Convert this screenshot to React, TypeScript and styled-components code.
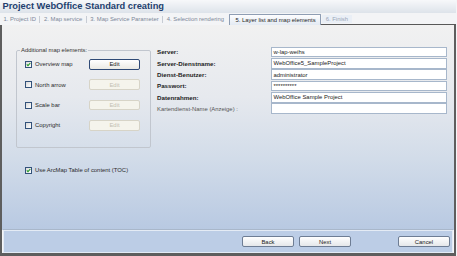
import React from "react";
import styled, { createGlobalStyle } from "styled-components";

const GlobalStyle = createGlobalStyle`
  html, body { margin: 0; padding: 0; }
  body {
    width: 457px; height: 256px; overflow: hidden; background: #f4f5f7;
    font-family: "Liberation Sans", Arial, sans-serif;
  }
`;

const Window = styled.div`
  width: 456px; height: 256px;
  display: flex; flex-direction: column;
`;

const TitleBar = styled.div`
  height: 13px; flex: none;
  display: flex; align-items: center; padding-left: 2.5px;
  background: linear-gradient(#f7f8fa, #dde3ea);
`;

const Title = styled.div`
  font-weight: bold; font-size: 9.3px; line-height: 1; color: #23406e;
`;

const TabRow = styled.div`
  height: 12px; flex: none; display: flex; align-items: stretch;
  background: #f3f4f6; font-size: 5.9px;
`;

const Tab = styled.div`
  display: flex; align-items: center; padding: 0 3.5px;
  color: #7d8899; white-space: nowrap;
`;

const Sep = styled.span`
  width: 1px; height: 7px; align-self: center; background: #c7ccd4;
`;

const ActiveTab = styled.div`
  display: flex; align-items: center; margin-left: 2px; margin-top: 1px;
  padding: 0 4px 0 5px; color: #262626; white-space: nowrap;
  border: 1px solid #8e9db3; border-bottom: none; border-radius: 1px 1px 0 0;
  background: linear-gradient(#fdfdfe, #e3eaf3);
`;

const TabRest = styled.div`
  flex: 1; display: flex; align-items: stretch; padding-left: 1px;
  border-bottom: 1px solid #585858;
`;

const FinishTab = styled.div`
  display: flex; align-items: center; margin: 2px 0 1px; padding: 0 4px;
  color: #9aa6b6; background: #eaeff6; white-space: nowrap;
`;

const Frame = styled.div`
  flex: 1; display: flex; flex-direction: column;
  border-left: 2px solid #5e5e5e; border-right: 2px solid #5e5e5e;
  border-bottom: 3px solid #5e5e5e;
`;

const Main = styled.div`
  flex: 1; display: flex; flex-direction: column;
  padding: 21.5px 0 0 14px;
  background: linear-gradient(#f1f1f1 0%, #e6e9ee 35%, #d2dce9 65%, #b8c9e2 100%);
  font-size: 5.9px;
`;

const Columns = styled.div`
  display: flex; gap: 6px; align-items: flex-start;
`;

const GroupBox = styled.fieldset`
  width: 135px; box-sizing: border-box; margin: 0;
  padding: 5.5px 0 16.3px 8px;
  border: 1px solid #c1c6ce; border-radius: 2px;
  display: flex; flex-direction: column; gap: 9.9px;
`;

const Legend = styled.legend`
  font-size: 5.9px; line-height: 7px; color: #333; padding: 0 1px; margin-left: -5px;
`;

const ElementRow = styled.div`
  display: grid; grid-template-columns: 7px 51px 51px; column-gap: 3px;
  align-items: center; height: 10.5px;
`;

const Box = styled.span`
  width: 7px; height: 7px; box-sizing: border-box; display: flex;
  align-items: center; justify-content: center;
  border: 1px solid #33527a;
  background: linear-gradient(135deg, #d9d9d9, #ffffff);
`;

const CheckLabel = styled.span`
  color: #2b2b2b; white-space: nowrap;
`;

const EditButton = styled.div<{ $disabled?: boolean }>`
  height: 10.5px; box-sizing: border-box; display: flex;
  align-items: center; justify-content: center; border-radius: 2px;
  border: 1px solid ${p => (p.$disabled ? "#d7d4c7" : "#2f4a76")};
  background: ${p => (p.$disabled ? "#f5f4ec" : "linear-gradient(#ffffff, #ebeae4)")};
  color: ${p => (p.$disabled ? "#c2beb2" : "#222")};
`;

const Form = styled.div`
  display: grid; grid-template-columns: 114px 176px;
  grid-auto-rows: 10.5px; row-gap: 0.85px; margin-top: 0.2px;
`;

const FieldLabel = styled.div<{ $plain?: boolean }>`
  display: flex; align-items: center; white-space: nowrap;
  font-weight: ${p => (p.$plain ? "normal" : "bold")};
  font-size: ${p => (p.$plain ? "5.9px" : "6.2px")};
  color: ${p => (p.$plain ? "#555" : "#1c1c1c")};
`;

const Field = styled.div`
  box-sizing: border-box; display: flex; align-items: center;
  border: 1px solid #a7b7cb; background: #fff; padding-left: 1.5px;
  color: #222; white-space: nowrap; overflow: hidden;
`;

const TocRow = styled.div`
  display: flex; align-items: center; gap: 3px; margin: 19px 0 0 9px;
`;

const BottomPanel = styled.div`
  height: 23px; box-sizing: border-box; flex: none; margin: 0 1px;
  display: flex; align-items: center; justify-content: flex-end;
  padding-right: 2px;
  background: #bccde6;
  border: 1px solid #e4ebf5;
  box-shadow: 0 -1px 0 #a9b7ca;
  font-size: 5.9px;
`;

const NavButton = styled.div<{ $gap?: number }>`
  width: 52px; height: 11px; box-sizing: border-box;
  margin-left: ${p => p.$gap ?? 0}px;
  display: flex; align-items: center; justify-content: center;
  border: 1px solid #6e7d94; border-radius: 2px;
  background: linear-gradient(#ffffff, #e5e7ea);
  color: #222;
`;

const Check = ({ checked }: { checked?: boolean }) => (
  <Box>
    {checked && (
      <svg width="5" height="5" viewBox="0 0 5 5">
        <path d="M0.8 2.4 L2 3.7 L4.3 1" fill="none" stroke="#1f9a23" strokeWidth="1.1" />
      </svg>
    )}
  </Box>
);

const elements = [
  { label: "Overview map", checked: true },
  { label: "North arrow" },
  { label: "Scale bar" },
  { label: "Copyright" },
];

const fields = [
  { label: "Server:", value: "w-lap-weihs" },
  { label: "Server-Dienstname:", value: "WebOffice5_SampleProject" },
  { label: "Dienst-Benutzer:", value: "administrator" },
  { label: "Passwort:", value: "**********" },
  { label: "Datenrahmen:", value: "WebOffice Sample Project" },
  { label: "Kartendienst-Name (Anzeige) :", value: "", plain: true },
];

export default function App() {
  return (
    <>
      <GlobalStyle />
      <Window>
        <TitleBar>
          <Title>Project WebOffice Standard creating</Title>
        </TitleBar>
        <TabRow>
          <Tab>1. Project ID</Tab>
          <Sep />
          <Tab>2. Map service</Tab>
          <Sep />
          <Tab>3. Map Service Parameter</Tab>
          <Sep />
          <Tab>4. Selection rendering</Tab>
          <ActiveTab>5. Layer list and map elements</ActiveTab>
          <TabRest>
            <FinishTab>6. Finish</FinishTab>
          </TabRest>
        </TabRow>
        <Frame>
          <Main>
            <Columns>
              <GroupBox>
                <Legend>Additional map elements:</Legend>
                {elements.map(e => (
                  <ElementRow key={e.label}>
                    <Check checked={e.checked} />
                    <CheckLabel>{e.label}</CheckLabel>
                    <EditButton $disabled={!e.checked}>Edit</EditButton>
                  </ElementRow>
                ))}
              </GroupBox>
              <Form>
                {fields.map(f => (
                  <React.Fragment key={f.label}>
                    <FieldLabel $plain={f.plain}>{f.label}</FieldLabel>
                    <Field>{f.value}</Field>
                  </React.Fragment>
                ))}
              </Form>
            </Columns>
            <TocRow>
              <Check checked />
              <CheckLabel>Use ArcMap Table of content (TOC)</CheckLabel>
            </TocRow>
          </Main>
          <BottomPanel>
            <NavButton>Back</NavButton>
            <NavButton $gap={5}>Next</NavButton>
            <NavButton $gap={47}>Cancel</NavButton>
          </BottomPanel>
        </Frame>
      </Window>
    </>
  );
}
